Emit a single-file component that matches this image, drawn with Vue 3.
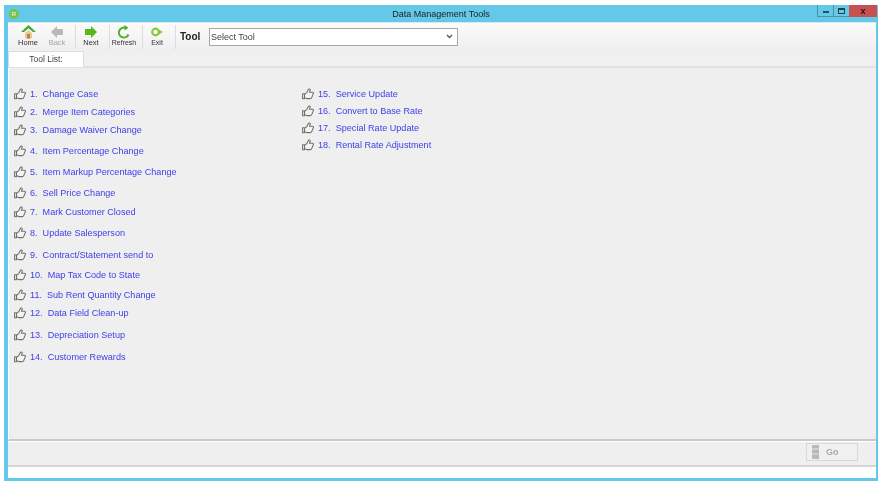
<script setup>
const left = [
  { n: '1.', t: 'Change Case', h: 18 },
  { n: '2.', t: 'Merge Item Categories', h: 18 },
  { n: '3.', t: 'Damage Waiver Change', h: 18 },
  { n: '4.', t: 'Item Percentage Change', h: 24 },
  { n: '5.', t: 'Item Markup Percentage Change', h: 18 },
  { n: '6.', t: 'Sell Price Change', h: 24 },
  { n: '7.', t: 'Mark Customer Closed', h: 14 },
  { n: '8.', t: 'Update Salesperson', h: 28 },
  { n: '9.', t: 'Contract/Statement send to', h: 16 },
  { n: '10.', t: 'Map Tax Code to State', h: 24 },
  { n: '11.', t: 'Sub Rent Quantity Change', h: 16 },
  { n: '12.', t: 'Data Field Clean-up', h: 20 },
  { n: '13.', t: 'Depreciation Setup', h: 24 },
  { n: '14.', t: 'Customer Rewards', h: 20 }
]
const right = [
  { n: '15.', t: 'Service Update', h: 17 },
  { n: '16.', t: 'Convert to Base Rate', h: 17 },
  { n: '17.', t: 'Special Rate Update', h: 17 },
  { n: '18.', t: 'Rental Rate Adjustment', h: 17 }
]
const columns = [left, right]
</script>

<template>
  <div class="page">
    <div class="window">
      <header class="titlebar">
        <span class="app-dot">R</span>
        <span class="title">Data Management Tools</span>
        <div class="win-btns">
          <span class="wb"><i class="min"></i></span>
          <span class="wb"><i class="max"></i></span>
          <span class="wb close">x</span>
        </div>
      </header>

      <div class="toolbar">
        <button class="tb home">
          <svg width="15" height="14" viewBox="0 0 15 14"><path d="M7.500 0 0 7h3l4.500-3.800L12 7h3z" fill="#45a83a"/><path d="M4 8 7.500 5 11 8v5.500H4z" fill="#e6cb9a"/><rect x="6" y="9" width="3" height="4.500" fill="#c0813d"/></svg>
          <span>Home</span>
        </button>
        <button class="tb off">
          <svg width="12" height="12" viewBox="0 0 12 12"><path d="M6 0 0 6l6 6V9h6V3H6z" fill="#b8b8b8"/></svg>
          <span>Back</span>
        </button>
        <i class="sep s1"></i>
        <button class="tb next">
          <svg width="12" height="12" viewBox="0 0 12 12"><path d="M6 0l6 6-6 6V9H0V3h6z" fill="#58b81c"/></svg>
          <span>Next</span>
        </button>
        <i class="sep s2"></i>
        <button class="tb refresh">
          <svg width="14" height="14" viewBox="0 0 14 14"><path d="M11.500 9.500A5 5 0 1 1 8.500 2.800" fill="none" stroke="#4fae2c" stroke-width="2"/><path d="M7.500 0l4 2.800-4 2.800z" fill="#4fae2c"/></svg>
          <span>Refresh</span>
        </button>
        <i class="sep s3"></i>
        <button class="tb exit">
          <svg width="12" height="11" viewBox="0 0 12 11"><circle cx="4.500" cy="5.500" r="3.300" fill="none" stroke="#8cc63f" stroke-width="2.200"/><path d="M7 2.500l5 3-5 3z" fill="#8cc63f"/></svg>
          <span>Exit</span>
        </button>
        <i class="sep s3"></i>
        <b class="tool-label">Tool</b>
        <select class="tool-select">
          <option>Select Tool</option>
        </select>
      </div>

      <div class="tabs">
        <div class="tab">Tool List:</div>
      </div>

      <main class="content">
        <ul v-for="(col, i) in columns" :key="i" class="col">
          <li v-for="item in col" :key="item.n" class="row" :style="{ height: item.h + 'px' }">
            <svg class="hand" width="12" height="12" viewBox="0 0 12 12">
              <path d="M.6 5.800h1.900v5H.6zM2.500 6.300 4.800 4.600 6.500 1.300c.9-.7 2 .1 1.600 1.300L7.500 4.300h3c.9 0 1.200 1 .7 1.600L9.700 9.600c-.3.700-.8 1-1.500 1H4.800L2.500 9.800z" fill="#f3f3f3" stroke="#707070" stroke-width="1.100" stroke-linejoin="round"/>
            </svg>
            <a class="link"><span class="num">{{ item.n }}</span><span>{{ item.t }}</span></a>
          </li>
        </ul>
      </main>

      <footer class="actions">
        <button class="go">
          <svg width="7" height="14" viewBox="0 0 7 14"><rect x="0" y="0" width="7" height="14" rx="1" fill="#b8b8b8"/><path d="M0 4h7M0 9h7" stroke="#e6e6e6"/></svg>
          <span>Go</span>
        </button>
      </footer>

      <div class="status"></div>
    </div>
  </div>
</template>

<style>
html, body { margin: 0; background: #fff; }
</style>

<style scoped>
.page {
  width: 882px;
  height: 485px;
  padding: 5px 4px 4px 4px;
  box-sizing: border-box;
  font-family: "Liberation Sans", Arial, sans-serif;
  overflow: hidden;
  filter: blur(0.6px);
}
.window {
  height: 100%;
  box-sizing: border-box;
  background: #f0f0f0;
  border: solid #64c8e8;
  border-width: 0 2px 3px 4px;
  display: flex;
  flex-direction: column;
}
.titlebar {
  height: 17px;
  flex: none;
  background: #64c8e8;
  display: flex;
  align-items: center;
  position: relative;
  margin: 0 -2px 0 -4px;
  padding-left: 5px;
}
.app-dot {
  width: 10px;
  height: 10px;
  border-radius: 50%;
  background: #7cc14a;
  color: #fff;
  font-size: 6px;
  line-height: 10px;
  text-align: center;
}
.title {
  position: absolute;
  left: 0;
  right: 0;
  text-align: center;
  font-size: 9px;
  color: #222;
}
.win-btns {
  position: absolute;
  right: 1px;
  top: 0;
  display: flex;
  height: 12px;
}
.wb {
  width: 17px;
  box-sizing: border-box;
  border: 1px solid #4f8ea3;
  border-top: 0;
  margin-right: -1px;
  display: flex;
  align-items: center;
  justify-content: center;
}
.wb .min { width: 6px; height: 2px; margin-top: 3px; background: #2d4a55; }
.wb .max { width: 7px; height: 6px; border: 1px solid #23404b; border-top-width: 2px; box-sizing: border-box; }
.wb.close {
  width: 28px;
  background: #c75050;
  border-color: #c75050;
  color: #2b1111;
  font-size: 9px;
  font-weight: 700;
  margin-right: 0;
}
.toolbar {
  height: 28px;
  flex: none;
  display: flex;
  align-items: center;
  padding-left: 2px;
  box-sizing: border-box;
  background: linear-gradient(#fbfbfb, #efefef);
  border-top: 1px solid #dfe6ea;
}
.tb {
  appearance: none;
  background: none;
  border: 0;
  padding: 2px 0 0;
  display: flex;
  flex-direction: column;
  align-items: center;
  justify-content: flex-start;
  height: 27px;
  font: 7.500px/8px "Liberation Sans", Arial, sans-serif;
  color: #333;
}
.tb svg { display: block; height: 14px; }
.tb.home { width: 36px; }
.tb.off { width: 22px; color: #a5a5a5; }
.tb.next { width: 30px; }
.tb.refresh { width: 28px; font-size: 7px; }
.tb.exit { width: 28px; font-size: 7px; }
.sep { width: 1px; height: 24px; background: #dcdcdc; flex: none; }
.sep.s1 { margin-left: 7px; }
.sep.s2 { margin-left: 3px; }
.sep.s3 { margin-left: 4px; }
.tool-label {
  font-size: 10px;
  margin: 0 9px 0 4px;
  width: 20px;
  color: #222;
}
.tool-select {
  width: 249px;
  height: 18px;
  box-sizing: border-box;
  font: 9px "Liberation Sans", Arial, sans-serif;
  color: #444;
  background: #fff url("data:image/svg+xml,%3Csvg xmlns='http://www.w3.org/2000/svg' width='7' height='5'%3E%3Cpath d='M1 1l2.500 2.500L6 1' fill='none' stroke='%23555' stroke-width='1.300'/%3E%3C/svg%3E") no-repeat right 4px center;
  border: 1px solid #a8a8a8;
  border-radius: 0;
  padding: 0 0 0 1px;
  appearance: none;
}
.tabs {
  height: 18px;
  flex: none;
  display: flex;
  align-items: flex-end;
  border-bottom: 2px solid #e2e2e2;
  background: #f0f0f0;
  box-sizing: border-box;
}
.tab {
  width: 76px;
  height: 16px;
  margin-bottom: -1px;
  background: #fff;
  border: 1px solid #dcdcdc;
  border-bottom: 0;
  box-sizing: border-box;
  font-size: 8.500px;
  line-height: 15px;
  text-align: center;
  color: #444;
}
.content {
  flex: 1;
  min-height: 0;
  display: flex;
  padding: 17px 0 0 5px;
  background: #efefef;
  border-left: 1px solid #fff;
  border-bottom: 2px solid #c9c9cf;
}
.col {
  list-style: none;
  margin: 0;
  padding: 0;
  width: 288px;
}
.row {
  display: flex;
  align-items: center;
  gap: 4px;
  box-sizing: border-box;
}
.hand { flex: none; }
.link {
  color: #4040ea;
  font-size: 9.100px;
  white-space: nowrap;
}
.num { margin-right: 5px; }
.actions {
  height: 26px;
  flex: none;
  display: flex;
  align-items: center;
  justify-content: flex-end;
  padding: 0 18px 3px 0;
  box-sizing: border-box;
  background: #efefef;
  border-top: 1px solid #fff;
  border-bottom: 2px solid #d6d6d6;
}
.go {
  appearance: none;
  width: 52px;
  height: 18px;
  box-sizing: border-box;
  background: #f0f0f0;
  border: 1px solid #d8d8d8;
  display: flex;
  align-items: center;
  gap: 7px;
  padding: 0 0 0 5px;
  font: 700 9px "Liberation Sans", Arial, sans-serif;
  color: #aaa;
}
.status {
  height: 11px;
  flex: none;
  background: #fff;
}
</style>
